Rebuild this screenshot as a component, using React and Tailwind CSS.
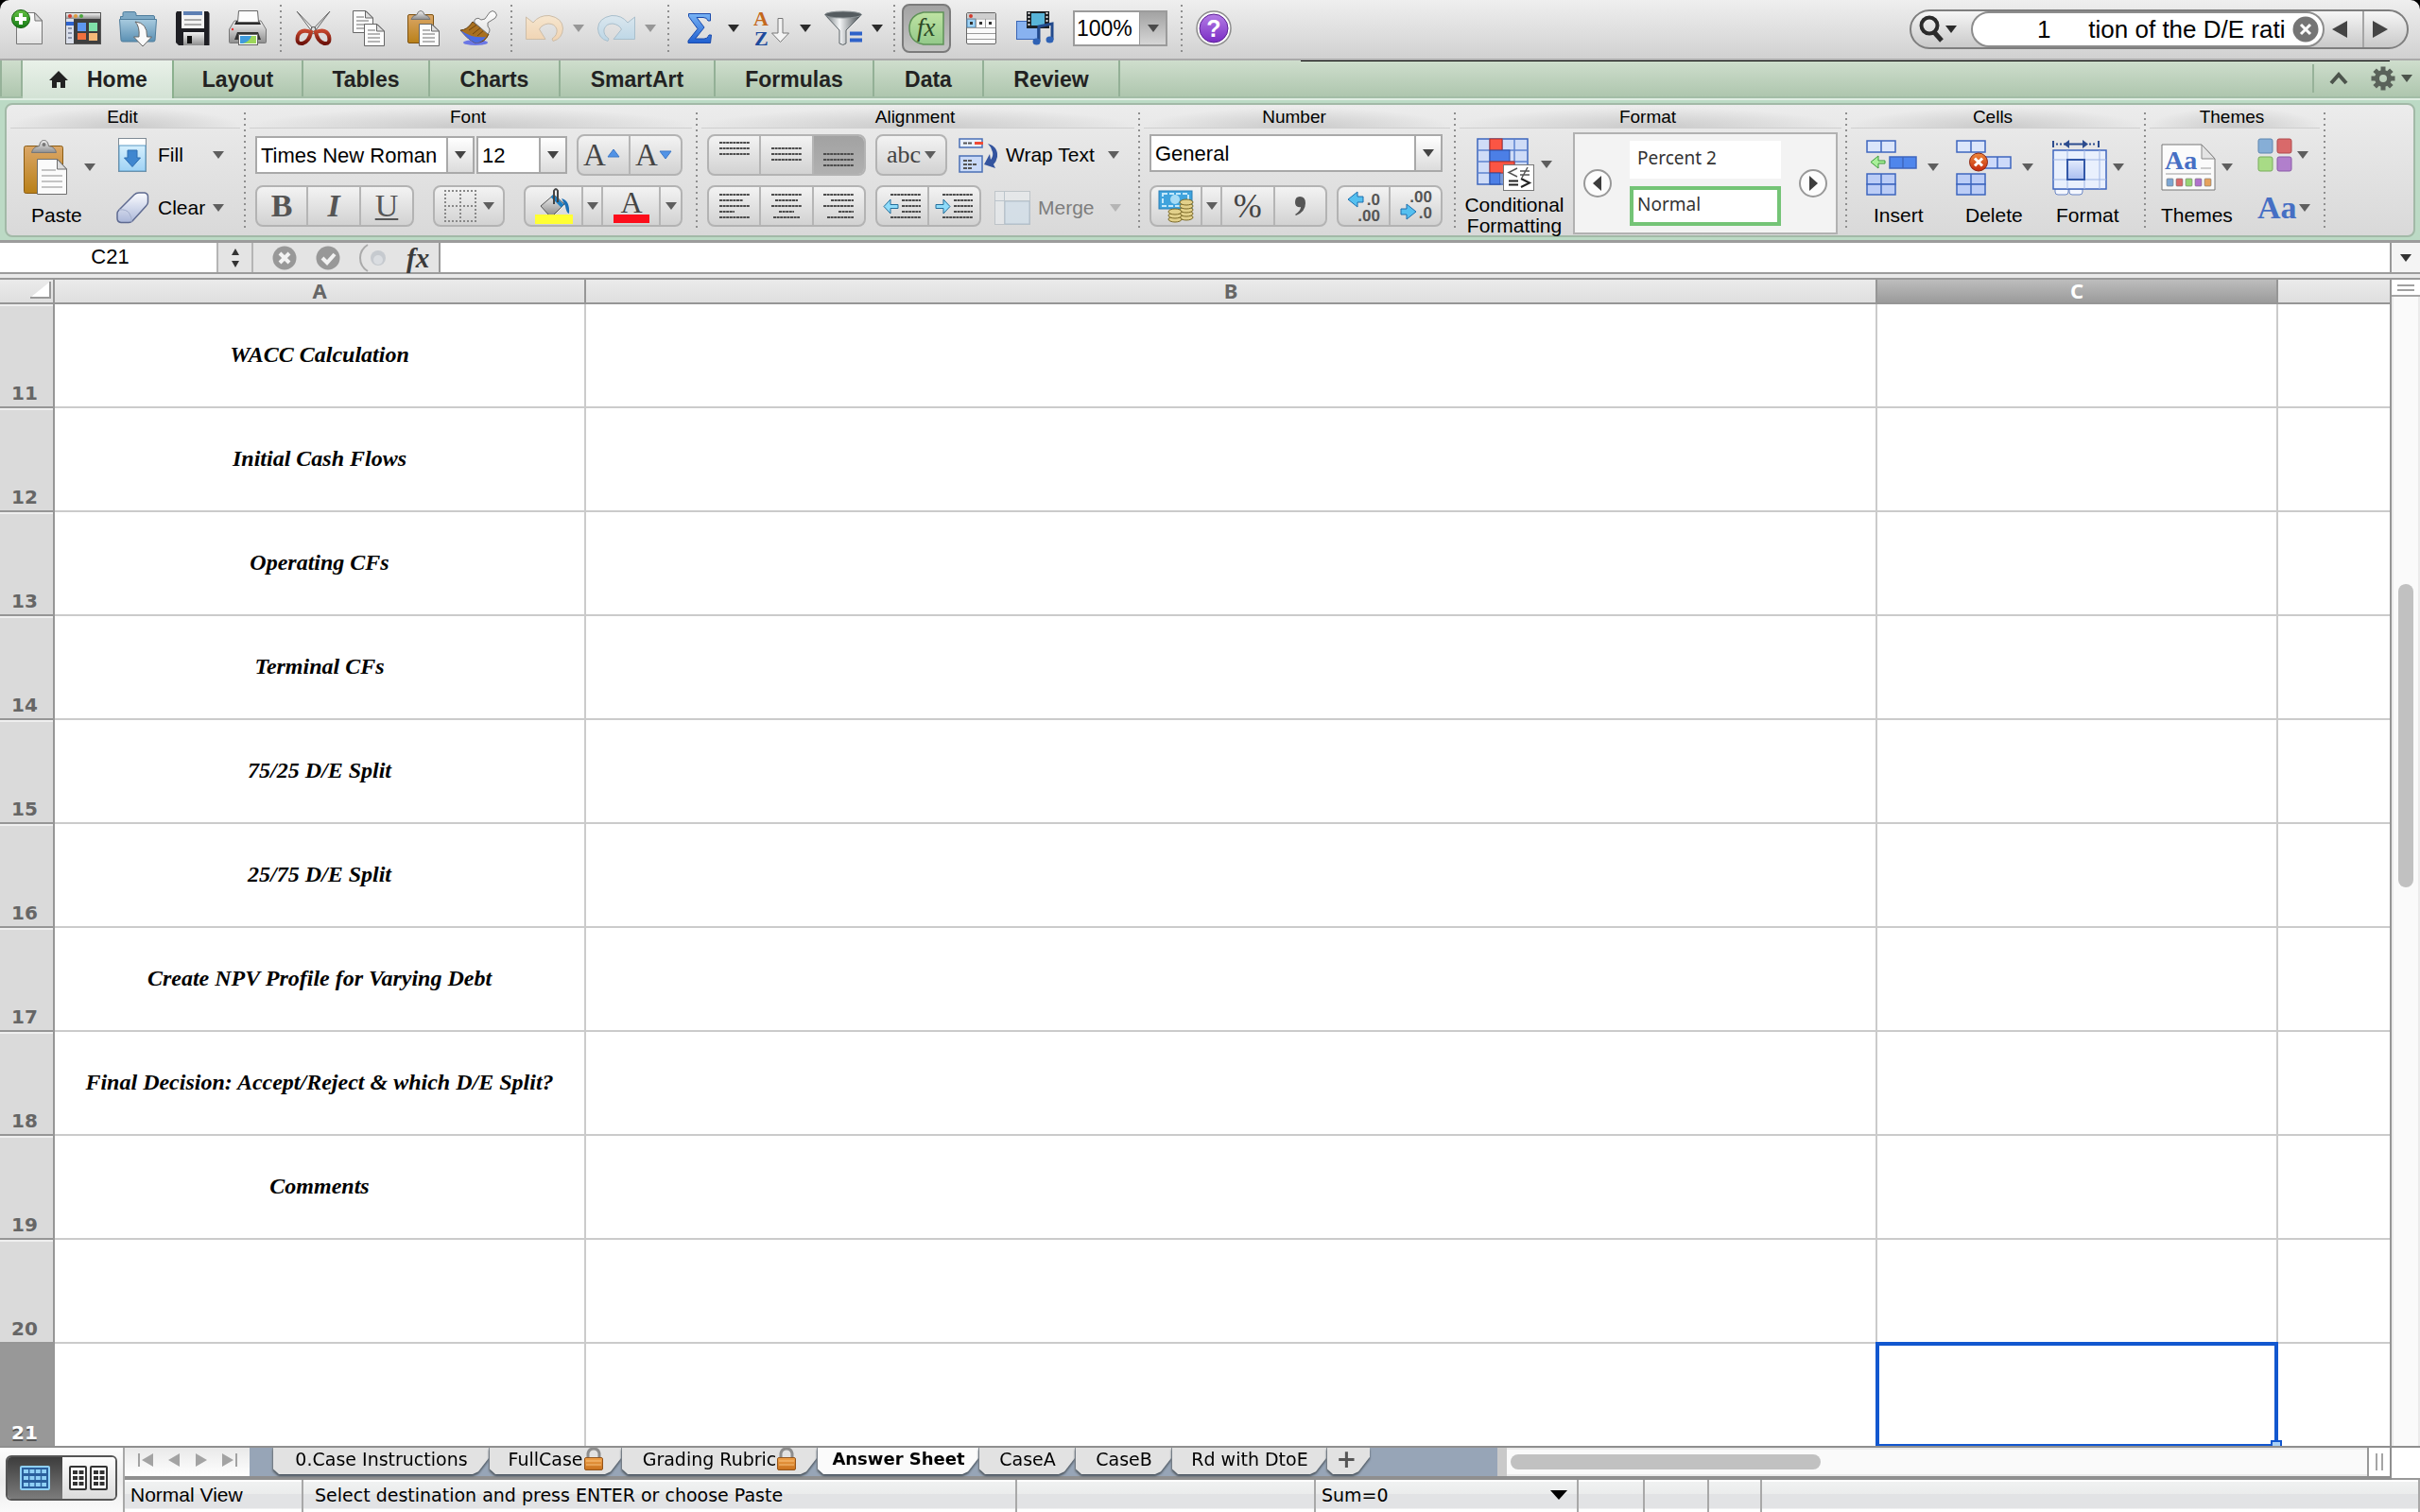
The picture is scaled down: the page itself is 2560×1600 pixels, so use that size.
import React from "react";

const SANS = "font-['Liberation_Sans',Arial,sans-serif]";
const GRANDE = "font-['DejaVu_Sans','Noto_Sans',sans-serif]";

/* ---------- small shared pieces ---------- */

function Arrow({ color = "#5e5e5e", className = "" }) {
  return (
    <svg viewBox="0 0 12 8" className={"h-2 w-3 shrink-0 " + className} aria-hidden="true">
      <path d="M0 0H12L6 8Z" fill={color} />
    </svg>
  );
}

function Dots({ className = "" }) {
  return (
    <div className={"w-0.5 shrink-0 bg-[repeating-linear-gradient(#8f8f8f_0_2px,transparent_2px_6px)] " + className} />
  );
}

function ToolSep({ wide = true }) {
  return (
    <div className={"flex h-[50px] shrink-0 justify-center " + (wide ? "w-[30px]" : "w-[26px]")}>
      <Dots className="h-full" />
    </div>
  );
}

function Tool({ label, children, className = "w-10" }) {
  return (
    <button type="button" aria-label={label} className={"flex h-10 shrink-0 items-center justify-center " + className}>
      {children}
    </button>
  );
}

function ToolArrow({ label, color = "#2b2b2b" }) {
  return (
    <button type="button" aria-label={label} className="flex h-10 w-3 shrink-0 items-center">
      <Arrow color={color} />
    </button>
  );
}

function Segment({ className = "", children }) {
  return (
    <div
      className={
        "flex h-11 shrink-0 divide-x-2 divide-[#b5b5b5] overflow-hidden rounded-lg border-2 border-[#b3b3b3] bg-linear-to-b from-[#f3f3f3] to-[#d2d2d2] " +
        className
      }
    >
      {children}
    </div>
  );
}

function Seg({ label, className = "flex-1", children, pressed = false }) {
  return (
    <button
      type="button"
      aria-label={label}
      aria-pressed={pressed}
      className={
        "flex items-center justify-center leading-none " +
        (pressed ? "bg-linear-to-b from-[#a2a2a2] to-[#b0b0b0] " : "") +
        className
      }
    >
      {children}
    </button>
  );
}

function Combo({ label, value, className, arrowWidth }) {
  return (
    <div className={"relative h-10 shrink-0 border-2 border-[#a9a9a9] bg-white " + className}>
      <select
        aria-label={label}
        defaultValue={value}
        className="h-full w-full appearance-none bg-transparent pl-1 text-[22px] text-black outline-none"
      >
        <option>{value}</option>
      </select>
      <span
        className={
          "pointer-events-none absolute inset-y-0 right-0 flex items-center justify-center border-l-2 border-[#a9a9a9] bg-linear-to-b from-white to-[#dcdcdc] " +
          arrowWidth
        }
      >
        <Arrow color="#444" />
      </span>
    </div>
  );
}

function Group({ title, width, children }) {
  return (
    <section aria-label={title} className={"flex shrink-0 flex-col " + width}>
      <h2 className="mx-1 h-[25px] border-b border-[#cfcfcf] bg-[radial-gradient(ellipse_50%_90%_at_50%_100%,#c9c9c9,transparent)] pr-1.5 text-center text-[19px] leading-[25px]">
        {title}
      </h2>
      {children}
    </section>
  );
}

function BigButton({ label, icon, className = "", arrowClass = "ml-4" }) {
  return (
    <button type="button" className={"flex shrink-0 flex-col pt-3 text-[21px] leading-6 " + className}>
      <span className="flex h-[58px] items-center">
        {icon}
        <Arrow className={arrowClass} />
      </span>
      <span className="mt-2.5">{label}</span>
    </button>
  );
}

function Lines({ rows, className = "" }) {
  return (
    <svg viewBox="0 0 32 32" className={"h-8 w-8 " + className} aria-hidden="true">
      {rows.map(([x, y, w]) => (
        <path key={y} d={`M${x} ${y}h${w}`} stroke="#4c4c4c" strokeWidth="2" strokeDasharray="3 0.6" />
      ))}
    </svg>
  );
}

/* ---------- gradients used by the icons ---------- */

function Gradients() {
  const list = [
    ["gPaper", "#ffffff", "#e2e2e2"],
    ["gGreen", "#66c244", "#157a16"],
    ["gFolder", "#a8cbdf", "#5b90b3"],
    ["gBoard", "#dba768", "#b98018"],
    ["gMetal", "#f4f4f4", "#8d8d8d"],
    ["gRed", "#c4452c", "#6d120a"],
    ["gBlue", "#79b4f5", "#1f5fd0"],
    ["gUndo", "#f6e6cf", "#f0d3b2"],
    ["gRedo", "#dbe7ee", "#bcd6e6"],
    ["gPurple", "#b47de6", "#7a2cc4"],
    ["gFx", "#bfe3a3", "#93c98a"],
    ["gCell", "#e4ecfd", "#a9bdf0"],
    ["gDel", "#f08a3a", "#c42a10"],
    ["gEraser", "#fbfcff", "#aab6d8"],
    ["gFill", "#d5effd", "#9fd2f5"],
    ["gLock", "#f0a24a", "#c8701c"],
  ];
  return (
    <svg className="absolute h-0 w-0" aria-hidden="true">
      <defs>
        {list.map(([id, a, b]) => (
          <linearGradient key={id} id={id} x1="0" y1="0" x2="0" y2="1">
            <stop offset="0" stopColor={a} />
            <stop offset="1" stopColor={b} />
          </linearGradient>
        ))}
        <linearGradient id="gFunnel" x1="0" y1="0" x2="1" y2="0">
          <stop offset="0" stopColor="#6c7478" />
          <stop offset="0.4" stopColor="#f4f6f7" />
          <stop offset="1" stopColor="#3f464a" />
        </linearGradient>
      </defs>
    </svg>
  );
}

/* ---------- toolbar icons (40 x 40) ---------- */

function Icon({ children, className = "h-10 w-10", box = "0 0 40 40" }) {
  return (
    <svg viewBox={box} className={"shrink-0 overflow-visible " + className} fill="none" aria-hidden="true">
      {children}
    </svg>
  );
}

const NewIcon = () => (
  <Icon>
    <path d="M7.500 3.500H27L34.500 11.500V36.500H7.500Z" fill="url(#gPaper)" stroke="#777" />
    <path d="M26.500 3.500L34.500 12H27Z" fill="#d8d8d8" stroke="#777" />
    <circle cx="12" cy="10" r="9.500" fill="url(#gGreen)" stroke="#14600f" />
    <path d="M12 4v12M6 10h12" stroke="#fff" strokeWidth="4" />
  </Icon>
);

const GalleryIcon = () => (
  <Icon>
    <rect x="1.500" y="3.500" width="37" height="33" fill="#3e3e3e" stroke="#555" />
    <rect x="2" y="4" width="36" height="6" fill="url(#gMetal)" />
    <circle cx="6" cy="7" r="2" fill="#d23a2e" />
    <circle cx="12" cy="7" r="2" fill="#e09a3c" />
    <circle cx="18" cy="7" r="2" fill="#4aa53c" />
    <rect x="2" y="10" width="8" height="26" fill="#d9deea" />
    <rect x="2" y="13" width="8" height="4" fill="#2d63cf" />
    <path d="M4 20h4M4 25h4M4 30h4" stroke="#8b93a8" strokeWidth="2" />
    <rect x="14" y="14" width="9" height="9" fill="#5d97f0" />
    <rect x="26" y="14" width="9" height="9" fill="#7fe0a8" />
    <rect x="14" y="25" width="9" height="7" fill="#f0703e" />
    <rect x="26" y="25" width="9" height="8" fill="#f4b978" />
  </Icon>
);

const OpenIcon = () => (
  <Icon>
    <path d="M1.500 7.500H4V4q0-1.500 1.500-1.500H16q1.500 0 2 2V6.500H36q1.500 0 1.500 1.500V12H1.500Z" fill="#7faac6" stroke="#4f7d9c" />
    <path d="M.500 10.500h39L38 32.500q0 1.500-2 1.500H4q-2 0-2-1.500Z" fill="url(#gFolder)" stroke="#4f7d9c" />
    <path d="M17 13q13 1 12.500 16h5L25 39l-9.500-10H21Q22 18 17 13Z" fill="#fafafa" stroke="#666" />
  </Icon>
);

const SaveIcon = () => (
  <Icon>
    <path d="M3 2H36l1.500 2V38H5l-3-3V4Z" fill="#1f1f24" />
    <rect x="8" y="2" width="24" height="18" fill="#f3f3f3" />
    <rect x="10" y="2" width="20" height="4" fill="#5d7fb3" />
    <path d="M11 11h18M11 16h18" stroke="#aaa" strokeWidth="2" />
    <rect x="10" y="24" width="22" height="14" fill="url(#gMetal)" />
    <rect x="14" y="28" width="5" height="8" fill="#111" />
  </Icon>
);

const PrintIcon = () => (
  <Icon>
    <path d="M6 12h28l5.500 9v13.500q0 1-1 1h-37q-1 0-1-1V21Z" fill="url(#gMetal)" stroke="#777" />
    <path d="M8 12h24l2 4H6Z" fill="#2a2a2a" />
    <path d="M10.500 1.500h20l1 12H9.500Z" fill="#fdfdfd" stroke="#666" />
    <path d="M9 24h22l3 8H6Z" fill="#333" />
    <rect x="10.500" y="26.500" width="20" height="11" fill="#fff" stroke="#666" />
    <rect x="12" y="28" width="17" height="8" fill="#3f9bdc" />
    <path d="M15 36q7-2 9-8h5v8Z" fill="#9cd65b" />
    <circle cx="4" cy="21" r="1.200" fill="#e33" />
  </Icon>
);

const CutIcon = () => (
  <Icon>
    <path d="M2 2L23 24L20 26Z" fill="#f4f4f4" stroke="#666" />
    <path d="M37 2L16 24L19 26Z" fill="#e0e0e0" stroke="#666" />
    <circle cx="19.500" cy="21" r="2.500" fill="#ddd" stroke="#444" />
    <path d="M17 24Q6 20 3 28Q1 37 8 36Q15 34 17 24Z" stroke="url(#gRed)" strokeWidth="4" />
    <path d="M22 24Q33 20 36 28Q38 37 31 36Q24 34 22 24Z" stroke="url(#gRed)" strokeWidth="4" />
  </Icon>
);

function Sheet({ x, y }) {
  return (
    <g transform={`translate(${x} ${y})`}>
      <path d="M.500.500H14L21.500 8V23.500H.500Z" fill="#fcfcfc" stroke="#666" />
      <path d="M13.500.500V8H21.500Z" fill="#ddd" stroke="#666" />
      <path d="M4 7h8M4 11h13M4 15h13M4 19h13" stroke="#b5b5b5" strokeWidth="2" />
    </g>
  );
}

const CopyIcon = () => (
  <Icon>
    <Sheet x={3} y={1} />
    <Sheet x={15} y={15} />
  </Icon>
);

const PasteSmallIcon = () => (
  <Icon>
    <rect x="3.500" y="5.500" width="27" height="30" rx="1.500" fill="url(#gBoard)" stroke="#7d5212" />
    <path d="M7 10.500q1-4 6-5q1-4 4-4t4 4q5 1 6 5Z" fill="url(#gMetal)" stroke="#777" />
    <Sheet x={15} y={15} />
  </Icon>
);

const BrushIcon = () => (
  <Icon>
    <ellipse cx="17" cy="35" rx="13" ry="3" fill="#4655e8" opacity=".75" />
    <path d="M14 13L31 26Q27 36 16 35Q8 31 1 22Q8 22 14 13Z" fill="#a9701f" stroke="#5d3a0c" />
    <path d="M1 22Q14 31 28 29Q24 36 16 35Q8 31 1 22Z" fill="#4b6be0" />
    <path d="M10 22l10-7M14 26l10-8M19 28l8-7" stroke="#6e430e" />
    <path d="M17 10q3-2 6 1l4-1 5-7q3-3 6 0t0 6l-8 5v4q4 4 0 8L16 14q-1-2 1-4Z" fill="url(#gPaper)" stroke="#777" />
  </Icon>
);

const UndoIcon = () => (
  <Icon>
    <path d="M.500 8L8 14Q14 6 25 6.500Q39 9 39.500 20Q39 31 29 33.500L28 31Q34 27 33 21Q31 15 24 15Q17 16 14.500 21L21 31.500H.500Z" fill="url(#gUndo)" stroke="#cdbda8" />
  </Icon>
);

const RedoIcon = () => (
  <Icon>
    <path d="M39.500 8L32 14Q26 6 15 6.500Q1 9 .500 20Q1 31 11 33.500L12 31Q6 27 7 21Q9 15 16 15Q23 16 25.500 21L17 31.500H39.500Z" fill="url(#gRedo)" stroke="#a9bfcc" />
  </Icon>
);

const SigmaIcon = () => (
  <Icon>
    <path d="M8.500 4.500H31.500V12H29Q28 8.500 24 8.500H17L25 19L15.500 31H25Q29 31 30 27H32.500L31.500 35.500H8V33L18 20.500L8.500 7.500Z" fill="url(#gBlue)" stroke="#1b4bab" />
  </Icon>
);

const SortIcon = () => (
  <Icon>
    <text x="1" y="17" fontFamily="Liberation Serif, serif" fontWeight="bold" fontSize="22" fill="#c4681c">A</text>
    <text x="2" y="38" fontFamily="Liberation Serif, serif" fontWeight="bold" fontSize="22" fill="#1e4a9c">Z</text>
    <path d="M27 9.500h5V25h6.500L29.500 34.500L20.500 25H27Z" fill="#f4f4f4" stroke="#777" />
  </Icon>
);

const FilterIcon = () => (
  <Icon>
    <path d="M1 6L16 22V36q4 3 7 0V22L39 6Z" fill="url(#gFunnel)" stroke="#5c6468" />
    <ellipse cx="20" cy="5.500" rx="19.500" ry="3.500" fill="#555c60" stroke="#8e9598" />
    <path d="M27 25.500h13M27 32.500h13" stroke="#2e62c9" strokeWidth="4" />
  </Icon>
);

const ToolboxIcon = () => (
  <Icon>
    <rect x="4.500" y="3.500" width="31" height="33" rx="1.500" fill="#fafafa" stroke="#666" />
    <path d="M5 5q0-1 1-1h28q1 0 1 1v4H5Z" fill="#cfcfcf" />
    <circle cx="9" cy="7" r="2" fill="#d33a2c" />
    <rect x="5" y="10" width="9" height="9" fill="#9fd3f5" stroke="#4c86b5" />
    <path d="M14.500 10v9M24.500 10v9M5 19.500h30M5 25.500h30M5 31.500h30M5 10h30" stroke="#999" />
    <path d="M8 14.500h3M18 14.500h3M28 14.500h3" stroke="#333" strokeWidth="3" />
  </Icon>
);

const MediaIcon = () => (
  <Icon>
    <rect x=".500" y="12.500" width="22" height="19" fill="#88b2f0" stroke="#3a66b5" />
    <rect x="11" y="2" width="24" height="18" fill="#1c2024" />
    <rect x="16" y="4" width="14" height="13" fill="#58b4d8" />
    <path d="M13.500 3v16M32.500 3v16" stroke="#ddd" strokeWidth="2" strokeDasharray="2 2" />
    <path d="M24 34V18l14-3v17" stroke="#234a8c" strokeWidth="3" />
    <ellipse cx="21.500" cy="34" rx="4" ry="3.500" fill="#2f62b5" />
    <ellipse cx="35.500" cy="32" rx="4" ry="3.500" fill="#2f62b5" />
  </Icon>
);

const HelpIcon = () => (
  <Icon>
    <circle cx="20" cy="20" r="18" fill="#fff" stroke="#8d8d8d" strokeWidth="1.500" />
    <circle cx="20" cy="20" r="15" fill="url(#gPurple)" stroke="#5d2196" />
    <text x="20" y="29" textAnchor="middle" fontFamily="Liberation Sans, sans-serif" fontWeight="bold" fontSize="25" fill="#fff">?</text>
  </Icon>
);

/* ---------- ribbon icons ---------- */

const PasteBigIcon = () => (
  <Icon box="0 0 46 58" className="h-[58px] w-[46px]">
    <rect x=".500" y="6.500" width="41" height="50" rx="2" fill="url(#gBoard)" stroke="#8a5c14" />
    <path d="M8.500 13.500q1-6 8-7q1-6 5-6t5 6q7 1 8 7Z" fill="url(#gMetal)" stroke="#777" />
    <circle cx="21.500" cy="5" r="2" fill="#777" />
    <path d="M14.500 20.500H36L45.500 31V57.500H14.500Z" fill="#fbfbfb" stroke="#6d6d6d" />
    <path d="M35.500 20.500V31H45.500Z" fill="#ddd" stroke="#6d6d6d" />
    <path d="M19 32h15M19 38h22M19 44h22M19 50h22" stroke="#c4c4c4" strokeWidth="2" />
  </Icon>
);

const FillIcon = () => (
  <Icon box="0 0 30 36" className="mx-0.5 h-9 w-[30px]">
    <rect x=".500" y=".500" width="29" height="35" fill="#fff" stroke="#7f8b95" />
    <rect x="1" y="8" width="28" height="27" fill="url(#gFill)" stroke="#5b9ac4" />
    <path d="M10 13h10v8h3.500L15 30.500L6.500 21H10Z" fill="#3f86cf" stroke="#2c6cb0" />
  </Icon>
);

const EraserIcon = () => (
  <Icon box="0 0 34 34" className="h-[34px] w-[34px]">
    <path d="M19 3q2-2 5-2h6q4 1 3.500 5v5q0 2-2 4L17 31q-2 2-5 1.500H5Q1 32 1 28v-5q0-2 2-4Z" fill="url(#gEraser)" stroke="#5e6a90" strokeWidth="1.500" />
    <path d="M3 19q8-1 11 4t2 9" stroke="#a3aecb" />
  </Icon>
);

const BordersIcon = () => (
  <Icon box="0 0 36 36" className="h-9 w-9">
    <path d="M1 2h34M1 18h34M1 34h34M2 1v34M18 1v34M34 1v34" stroke="#888" strokeWidth="2" strokeDasharray="2 2" />
  </Icon>
);

const BucketIcon = () => (
  <Icon box="0 0 40 40" className="h-10 w-10">
    <path d="M6 20L20 8L31 18L19 30H15Z" fill="url(#gMetal)" stroke="#555" />
    <path d="M18 9L29 20" stroke="#1d7fc4" strokeWidth="4" />
    <path d="M28 12q9 2 8 16q-3-1-4-8Z" fill="#1c6fb5" />
    <path d="M20 18V4q2-4 4 0V16" stroke="#444" strokeWidth="2" />
    <rect x="0" y="29" width="40" height="10" fill="#ffff33" />
  </Icon>
);

const FontColorIcon = () => (
  <Icon box="0 0 40 40" className="h-10 w-10">
    <text x="20" y="27" textAnchor="middle" fontFamily="Liberation Serif, serif" fontSize="32" fill="#444">A</text>
    <rect x="1" y="29" width="38" height="9" fill="#fc0d1b" />
  </Icon>
);

const SizeIcon = ({ down }) => (
  <Icon box="0 0 44 36" className="h-9 w-11">
    <text x="0" y="29" fontFamily="Liberation Serif, serif" fontSize="33" fill="#444">A</text>
    <path d={down ? "M26 14h12L32 22Z" : "M26 20h12L32 12Z"} fill="#5293e6" stroke="#3c78c8" />
  </Icon>
);

const IndentIcon = ({ right }) => (
  <Icon box="0 0 42 32" className="h-8 w-[42px]">
    <path d="M8 4h32M20 10h20M20 16h20M20 22h20M8 28h32" stroke="#4c4c4c" strokeWidth="2" strokeDasharray="3 0.6" />
    {right ? (
      <path d="M1 14.500h8V9L16 16.500L9 24v-5.500H1Z" fill="#8fdcfa" stroke="#246f9c" />
    ) : (
      <path d="M16 14.500h-8V9L1 16.500L8 24v-5.500h8Z" fill="#8fdcfa" stroke="#246f9c" />
    )}
  </Icon>
);

const WrapIcon = () => (
  <Icon box="0 0 42 38" className="h-[38px] w-[42px]">
    <rect x="1" y="2" width="24" height="9" fill="#eaf1fd" stroke="#4a6fb5" strokeWidth="1.500" />
    <path d="M5 6.500h10" stroke="#555" strokeWidth="2" strokeDasharray="4 1" />
    <path d="M17 6.500h9" stroke="#f04a34" strokeWidth="3" />
    <rect x="1" y="20" width="24" height="17" fill="#c9d9f7" stroke="#4a6fb5" strokeWidth="1.500" />
    <path d="M5 25h10M5 29h14M5 33h10" stroke="#555" strokeWidth="2" strokeDasharray="4 1" />
    <path d="M31 7Q42 10 41 21Q40 26 37 29L39 33L27 29L33 18L34 24Q37 20 36 16Q35 11 31 7Z" fill="#34549e" />
  </Icon>
);

const MergeIcon = () => (
  <Icon box="0 0 38 36" className="h-9 w-[38px] opacity-60">
    <rect x=".500" y=".500" width="37" height="35" fill="#e9edf0" stroke="#aab4bc" />
    <rect x="11" y="11" width="26" height="24" fill="#cfe0ee" stroke="#93abc0" />
    <path d="M0 10.500h37M10.500 0v36" stroke="#a5b4c0" />
  </Icon>
);

const MoneyIcon = () => (
  <Icon box="0 0 38 36" className="h-9 w-[38px]">
    <rect x="1" y="2" width="35" height="19" fill="#3fa3dd" stroke="#2b7fb5" />
    <rect x="5" y="5" width="27" height="13" stroke="#c4e8fa" strokeWidth="2" strokeDasharray="5 2" />
    <circle cx="18" cy="11" r="5" fill="#a8dcf5" />
    {[30, 26, 22, 18, 14].map((y) => (
      <ellipse key={y} cx="30" cy={y} rx="7" ry="3" fill="#e2d08a" stroke="#7c6a28" />
    ))}
    {[32, 28, 24].map((y) => (
      <ellipse key={y} cx="18" cy={y} rx="7" ry="3" fill="#e2d08a" stroke="#7c6a28" />
    ))}
  </Icon>
);

const DecimalIcon = ({ increase }) => (
  <Icon box="0 0 40 38" className="h-[38px] w-10">
    <g fontFamily="Liberation Sans, sans-serif" fontWeight="bold" fontSize="17" fill="#555">
      <text x="37" y={increase ? 18 : 15} textAnchor="end">{increase ? ".0" : ".00"}</text>
      <text x="37" y={increase ? 35 : 32} textAnchor="end">{increase ? ".00" : ".0"}</text>
    </g>
    {increase ? (
      <path d="M19 9h-6V4L3 12l10 8v-5h6Z" fill="#55c0f0" stroke="#1d6fae" />
    ) : (
      <path d="M4 22h6v-5l10 8-10 8v-5H4Z" fill="#55c0f0" stroke="#1d6fae" />
    )}
  </Icon>
);

const CondIcon = () => (
  <Icon box="0 0 62 56" className="h-14 w-[62px]">
    <rect x="1" y="1" width="53" height="48" fill="#cfdcf7" stroke="#3d66bd" strokeWidth="1.500" />
    <path d="M14 1v48M27 1v48M40 1v48M1 13h53M1 25h53M1 37h53" stroke="#5d83d0" strokeWidth="1.500" />
    <rect x="14" y="1" width="13" height="12" fill="#fb5544" stroke="#b52e22" />
    <rect x="14" y="13" width="21" height="12" fill="#4c7fe6" stroke="#274fa8" />
    <rect x="14" y="25" width="26" height="12" fill="#fb5544" stroke="#b52e22" />
    <rect x="14" y="37" width="11" height="12" fill="#4c7fe6" stroke="#274fa8" />
    <rect x="28.500" y="28.500" width="32" height="27" fill="#fff" stroke="#777" />
    <path d="M43 32l-9 4.500 9 4.500M46 35h10M46 39h10M54 31l-6 11" stroke="#555" strokeWidth="1.500" />
    <path d="M34 45.500h10M34 49.500h10M47 43l9 4.500-9 4.500" stroke="#222" strokeWidth="2" />
  </Icon>
);

const CellPair = ({ x, y, w = 30, h = 12, fill = "#dbe6fb" }) => (
  <g stroke="#3e66be" strokeWidth="1.500">
    <rect x={x} y={y} width={w} height={h} fill={fill} />
    <path d={`M${x + w / 2} ${y}v${h}`} />
  </g>
);

const InsertIcon = () => (
  <Icon box="0 0 54 58" className="h-[58px] w-[54px]">
    <CellPair x={1} y={1} />
    <CellPair x={25} y={18} w={28} fill="#4f86ec" />
    <CellPair x={1} y={36} h={11} fill="#bccdf6" />
    <CellPair x={1} y={47} h={11} fill="#bccdf6" />
    <path d="M20 22h-7v-5L5 23.500l8 6.500v-5h7Z" fill="#a9f09a" stroke="#3c9a3a" />
  </Icon>
);

const DeleteIcon = () => (
  <Icon box="0 0 60 58" className="h-[58px] w-[60px]">
    <CellPair x={1} y={1} />
    <CellPair x={30} y={18} w={28} fill="#cddafa" />
    <CellPair x={1} y={36} h={11} fill="#bccdf6" />
    <CellPair x={1} y={47} h={11} fill="#bccdf6" />
    <circle cx="24" cy="23.500" r="9.500" fill="url(#gDel)" stroke="#8c2410" />
    <path d="M20 19.500l8 8M28 19.500l-8 8" stroke="#fff" strokeWidth="3" />
  </Icon>
);

const FormatIcon = () => (
  <Icon box="0 0 58 60" className="h-[60px] w-[58px]">
    <path d="M1 2v7M49 2v7" stroke="#2c4c8e" strokeWidth="2" />
    <path d="M4 5.500h10M39 5.500h8" stroke="#2c4c8e" strokeWidth="2" strokeDasharray="2 2" />
    <path d="M16 5.500h20" stroke="#2c4c8e" strokeWidth="2" />
    <path d="M12 5.500l6-4.500v9ZM38 5.500l-6-4.500v9Z" fill="#2c4c8e" />
    <path d="M3 53h14v3q0 3-3 3H6q-3 0-3-3ZM18 53h14v3q0 3-3 3h-8q-3 0-3-3Z" fill="#f4f7ff" stroke="#6a86c4" />
    <rect x="1" y="12" width="56" height="41" fill="#e9f0fd" stroke="#3e66be" strokeWidth="1.500" />
    <path d="M16 12v41M34 12v41M50 12v41M1 22h56M1 43h56" stroke="#9fb5e4" />
    <rect x="16" y="22" width="18" height="21" fill="url(#gCell)" stroke="#3358a8" strokeWidth="2" />
  </Icon>
);

const ThemesIcon = () => (
  <Icon box="0 0 58 50" className="h-[50px] w-[58px]">
    <path d="M1 1H43L57 16V49H1Z" fill="#fbfbfb" stroke="#777" />
    <path d="M43 1V16H57Z" fill="#e4e4e4" stroke="#888" />
    <text x="4" y="27" fontFamily="Liberation Serif, serif" fontWeight="bold" fontSize="28" fill="#466fc4">Aa</text>
    <path d="M42 26h11M5 32h48" stroke="#ccc" strokeWidth="2" />
    {["#7da7d4", "#d9696a", "#96d372", "#b070cc", "#e6a25c"].map((c, i) => (
      <rect key={c} x={6 + i * 10} y="37" width="7" height="8" rx="1" fill={c} stroke="#777" strokeWidth=".6" />
    ))}
  </Icon>
);

const ColorsIcon = () => (
  <Icon box="0 0 38 36" className="h-9 w-[38px]">
    <rect x="1" y="1" width="15" height="15" rx="2" fill="#86aed6" stroke="#5c86b0" />
    <rect x="21" y="1" width="15" height="15" rx="2" fill="#d9696a" stroke="#b04a4c" />
    <rect x="1" y="20" width="15" height="15" rx="2" fill="#a8db86" stroke="#78ad5a" />
    <rect x="21" y="20" width="15" height="15" rx="2" fill="#b17fcc" stroke="#8a5aa8" />
  </Icon>
);

const LockIcon = () => (
  <Icon box="0 0 22 26" className="h-[26px] w-[22px]">
    <path d="M5 13V7q1-5 6-5t6 5v6" stroke="#8d8d8d" strokeWidth="3" />
    <rect x="1.500" y="11.500" width="19" height="13" rx="1.500" fill="url(#gLock)" stroke="#94541a" />
    <path d="M3 15h16M3 19h16" stroke="#f7c07c" />
  </Icon>
);

/* ---------- window sections ---------- */

function Toolbar() {
  return (
    <div className="bg-black">
      <div className="flex h-16 items-start justify-between rounded-t-[10px] border-b-2 border-[#a9a9a9] bg-linear-to-b from-[#efefef] to-[#d1d1d1] pr-3 pl-2.5">
        <div className="flex items-center pt-1">
          <div className="flex gap-[18px]">
            <Tool label="New"><NewIcon /></Tool>
            <Tool label="Template gallery"><GalleryIcon /></Tool>
            <Tool label="Open"><OpenIcon /></Tool>
            <Tool label="Save"><SaveIcon /></Tool>
            <Tool label="Print"><PrintIcon /></Tool>
          </div>
          <ToolSep />
          <div className="flex gap-[18px]">
            <Tool label="Cut"><CutIcon /></Tool>
            <Tool label="Copy"><CopyIcon /></Tool>
            <Tool label="Paste"><PasteSmallIcon /></Tool>
            <Tool label="Format painter"><BrushIcon /></Tool>
          </div>
          <ToolSep />
          <div className="flex">
            <Tool label="Undo" className="mr-2.5 w-10"><UndoIcon /></Tool>
            <ToolArrow label="Undo history" color="#979797" />
            <Tool label="Redo" className="mr-2.5 ml-3.5 w-10"><RedoIcon /></Tool>
            <ToolArrow label="Redo history" color="#979797" />
          </div>
          <ToolSep wide={false} />
          <div className="flex">
            <Tool label="AutoSum" className="mr-2.5 w-10"><SigmaIcon /></Tool>
            <ToolArrow label="AutoSum options" />
            <Tool label="Sort" className="mr-2.5 ml-3.5 w-10"><SortIcon /></Tool>
            <ToolArrow label="Sort options" />
            <Tool label="Filter" className="mr-2.5 ml-3.5 w-10"><FilterIcon /></Tool>
            <ToolArrow label="Filter options" />
          </div>
          <div className="flex h-[50px] w-5 justify-center pl-1">
            <Dots className="h-full" />
          </div>
          <button
            type="button"
            aria-label="Formula builder"
            aria-pressed="true"
            className="flex h-[52px] w-[52px] items-center justify-center rounded-lg border-2 border-[#7b7b7b] bg-linear-to-b from-[#a3a3a3] to-[#c4c4c4]"
          >
            <Icon box="0 0 38 36" className="h-9 w-[38px]">
              <path d="M37 1V35H16Q1 32 1 18T16 1Z" fill="url(#gFx)" stroke="#5f9258" strokeWidth="1.500" />
              <text x="9" y="26" fontFamily="Liberation Serif, serif" fontStyle="italic" fontSize="27" fill="#2c4a26">fx</text>
            </Icon>
          </button>
          <div className="flex items-center gap-[17px] pl-3">
            <Tool label="Toolbox"><ToolboxIcon /></Tool>
            <Tool label="Media browser"><MediaIcon /></Tool>
          </div>
          <div className="relative ml-5 h-[38px] w-[100px] border-2 border-[#9b9b9b] bg-white">
            <select aria-label="Zoom" defaultValue="100%" className="h-full w-full appearance-none bg-transparent pl-0.5 text-[23px] outline-none">
              <option>100%</option>
            </select>
            <span className="pointer-events-none absolute inset-y-0 right-0 flex w-7 items-center justify-center border-l border-[#999] bg-linear-to-b from-[#a3a3a3] to-[#d6d6d6]">
              <Arrow color="#4a4a4a" />
            </span>
          </div>
          <ToolSep />
          <Tool label="Help" className="w-[38px]"><HelpIcon /></Tool>
        </div>

        <form
          role="search"
          onSubmit={(e) => e.preventDefault()}
          className="mt-2.5 flex h-[42px] w-[528px] items-center overflow-hidden rounded-full border-2 border-[#7e7e7e] bg-linear-to-b from-[#f6f6f6] to-[#c9c9c9]"
        >
          <button type="button" aria-label="Search scope" className="flex w-[63px] items-center pl-2">
            <Icon box="0 0 28 30" className="h-[30px] w-7">
              <circle cx="11" cy="11" r="8.500" stroke="#2b2b2b" strokeWidth="4" />
              <path d="M16 18l8 9" stroke="#2b2b2b" strokeWidth="5" />
            </Icon>
            <Arrow color="#2b2b2b" />
          </button>
          <label className="flex h-full w-[374px] items-center rounded-full border-2 border-[#8c8c8c] bg-white pr-1">
            <input
              aria-label="Search in sheet"
              defaultValue={"1\u2003\u2004\u2009tion of the D/E rati"}
              className="w-0 flex-1 bg-transparent pl-[68px] text-[26px] outline-none"
            />
            <Icon box="0 0 28 28" className="h-7 w-7">
              <circle cx="14" cy="14" r="13.500" fill="#757575" />
              <path d="M9 9l10 10M19 9L9 19" stroke="#fff" strokeWidth="3" />
            </Icon>
          </label>
          <button type="button" aria-label="Previous result" className="flex h-full w-[42px] items-center justify-center border-r-2 border-[#a5a5a5] pr-2">
            <Icon box="0 0 16 18" className="h-[18px] w-4"><path d="M16 0V18L0 9Z" fill="#444" /></Icon>
          </button>
          <button type="button" aria-label="Next result" className="flex h-full flex-1 items-center justify-center pr-3">
            <Icon box="0 0 16 18" className="h-[18px] w-4"><path d="M0 0V18L16 9Z" fill="#444" /></Icon>
          </button>
        </form>
      </div>
    </div>
  );
}

const TABS = [
  ["Layout", "w-[137px]"],
  ["Tables", "w-[134px]"],
  ["Charts", "w-[138px]"],
  ["SmartArt", "w-[164px]"],
  ["Formulas", "w-[168px]"],
  ["Data", "w-[116px]"],
  ["Review", "w-[144px]"],
];

function RibbonTabs() {
  return (
    <nav className="relative flex h-10 items-stretch border-b-2 border-[#a3bda6] bg-linear-to-b from-[#cfdecd] to-[#aec6ae] text-[23px] font-bold text-[#222] [text-shadow:0_2px_0_rgba(255,255,255,0.45)]">
      <div className="absolute top-0 right-8 left-[1376px] h-px bg-black" />
      <div className="w-6 border-x-2 border-[#96b299]" />
      <button type="button" aria-current="page" className="-mb-0.5 flex w-40 items-center border-r-2 border-[#8bb08e] bg-linear-to-b from-[#e9f1e9] to-[#d3e2d5] pl-7">
        <Icon box="0 0 20 18" className="h-[18px] w-5">
          <path d="M10 0L20 10H17V18H12V12H8V18H3V10H0Z" fill="#222" />
        </Icon>
        <span className="ml-5">Home</span>
      </button>
      {TABS.map(([name, w]) => (
        <button key={name} type="button" className={"border-r-2 border-[#93b096] pt-0.5 " + w}>
          {name}
        </button>
      ))}
      <div className="my-1 ml-auto flex items-center border-l-2 border-[#97b299] pr-2">
        <button type="button" aria-label="Collapse ribbon" className="ml-4">
          <Icon box="0 0 20 14" className="h-3.5 w-5"><path d="M2 12L10 3L18 12" stroke="#4c544c" strokeWidth="4" /></Icon>
        </button>
        <button type="button" aria-label="Ribbon preferences" className="ml-6 flex items-center">
          <Icon box="0 0 26 26" className="h-[26px] w-[26px]">
            <circle cx="13" cy="13" r="6.500" stroke="#5a625a" strokeWidth="5" />
            {[0, 45, 90, 135].map((a) => (
              <path key={a} d="M13 0.500V5M13 21V25.500" stroke="#5a625a" strokeWidth="5" transform={`rotate(${a} 13 13)`} />
            ))}
          </Icon>
          <Arrow className="ml-1.5" color="#4c544c" />
        </button>
      </div>
    </nav>
  );
}

function Ribbon() {
  const full = 32;
  return (
    <div className="border-t-2 border-[#e0eee3] bg-[#bcdac5] px-[5px] pt-[3px] pb-[3px]">
      <div className="flex h-[142px] rounded-lg border-2 border-[#a2b9a7] bg-linear-to-b from-[#ececec] to-[#d9d9d9]">
        <Group title="Edit" width="w-[251px]">
          <div className="flex">
            <button type="button" className="ml-[18px] flex w-[78px] flex-col items-start pt-3 text-[21px] leading-6">
              <span className="flex h-[58px] items-center">
                <PasteBigIcon />
                <Arrow className="ml-[18px]" />
              </span>
              <span className="mt-2.5 pl-2">Paste</span>
            </button>
            <div className="flex flex-col gap-2.5 pt-1.5 pl-5 text-[21px]">
              <button type="button" className="flex h-11 items-center">
                <FillIcon />
                <span className="ml-2.5 w-[58px] text-left">Fill</span>
                <Arrow />
              </button>
              <button type="button" className="flex h-11 items-center pt-1">
                <EraserIcon />
                <span className="ml-2.5 w-[58px] text-left">Clear</span>
                <Arrow />
              </button>
            </div>
          </div>
        </Group>
        <Dots className="mt-2 mb-1" />

        <Group title="Font" width="w-[476px]">
          <div className="flex flex-col gap-2.5 pt-1.5 pl-2.5">
            <div className="flex items-center">
              <Combo label="Font name" value="Times New Roman" className="w-[232px]" arrowWidth="w-7" />
              <Combo label="Font size" value="12" className="ml-0.5 w-24" arrowWidth="w-7" />
              <Segment className="ml-2.5 w-28">
                <Seg label="Increase font size"><SizeIcon /></Seg>
                <Seg label="Decrease font size"><SizeIcon down /></Seg>
              </Segment>
            </div>
            <div className="flex font-['Liberation_Serif',serif] text-[34px] text-[#555]">
              <Segment className="w-[168px]">
                <Seg label="Bold" className="w-[54px]"><b>B</b></Seg>
                <Seg label="Italic" className="w-[56px]"><i className="font-bold">I</i></Seg>
                <Seg label="Underline"><u className="decoration-2 underline-offset-2">U</u></Seg>
              </Segment>
              <Segment className="ml-5 w-[76px]">
                <Seg label="Borders" className="flex-1 gap-1.5"><BordersIcon /><Arrow /></Seg>
              </Segment>
              <Segment className="ml-5 w-[168px]">
                <Seg label="Fill color" className="w-[61px]"><BucketIcon /></Seg>
                <Seg label="Fill color options" className="w-[21px]"><Arrow /></Seg>
                <Seg label="Font color" className="flex-1"><FontColorIcon /></Seg>
                <Seg label="Font color options" className="w-[21px]"><Arrow /></Seg>
              </Segment>
            </div>
          </div>
        </Group>
        <Dots className="mt-2 mb-1" />

        <Group title="Alignment" width="w-[466px]">
          <div className="flex flex-col gap-2.5 pt-1.5 pl-2.5 text-[21px]">
            <div className="flex items-center">
              <Segment className="w-[168px]">
                <Seg label="Align top"><Lines rows={[[0, 3, full], [0, 9, full], [0, 15, full]]} /></Seg>
                <Seg label="Align middle"><Lines rows={[[0, 9, full], [0, 15, full], [0, 21, full]]} /></Seg>
                <Seg label="Align bottom" pressed><Lines rows={[[0, 15, full], [0, 21, full], [0, 27, full]]} /></Seg>
              </Segment>
              <Segment className="ml-2.5 w-[76px]">
                <Seg label="Orientation" className="flex-1 gap-1 font-['Liberation_Serif',serif] text-[26px] text-[#444]">
                  abc
                  <Arrow />
                </Seg>
              </Segment>
              <button type="button" className="ml-3 flex items-center">
                <WrapIcon />
                <span className="ml-2 w-[108px] text-left">Wrap Text</span>
                <Arrow />
              </button>
            </div>
            <div className="flex items-center">
              <Segment className="w-[168px]">
                <Seg label="Align left"><Lines rows={[[0, 4, 32], [0, 10, 25], [0, 16, 32], [0, 22, 16], [0, 28, 32]]} /></Seg>
                <Seg label="Align center"><Lines rows={[[0, 4, 32], [4, 10, 24], [0, 16, 32], [8, 22, 16], [2, 28, 28]]} /></Seg>
                <Seg label="Align right"><Lines rows={[[0, 4, 32], [8, 10, 24], [0, 16, 32], [16, 22, 16], [4, 28, 28]]} /></Seg>
              </Segment>
              <Segment className="ml-2.5 w-28">
                <Seg label="Decrease indent"><IndentIcon /></Seg>
                <Seg label="Increase indent"><IndentIcon right /></Seg>
              </Segment>
              <button type="button" className="ml-3.5 flex items-center pt-1 text-[#7d7d7d]">
                <MergeIcon />
                <span className="ml-2 w-[76px] text-left">Merge</span>
                <Arrow color="#b5b5b5" />
              </button>
            </div>
          </div>
        </Group>
        <Dots className="mt-2 mb-1" />

        <Group title="Number" width="w-[332px]">
          <div className="flex flex-col gap-2.5 pt-1.5 pl-2.5">
            <div className="h-11">
              <Combo label="Number format" value="General" className="w-[310px]" arrowWidth="w-7" />
            </div>
            <div className="flex">
              <Segment className="w-[188px]">
                <Seg label="Accounting format" className="w-[54px]"><MoneyIcon /></Seg>
                <Seg label="Currency options" className="w-[21px]"><Arrow /></Seg>
                <Seg label="Percent style" className="flex-1 font-['Liberation_Serif',serif] text-[36px] text-[#444]">%</Seg>
                <Seg label="Comma style" className="flex-1">
                  <Icon box="0 0 12 20" className="h-5 w-3">
                    <path d="M6 0q6 0 6 7q0 9-10 13l-1-1q6-4 6-8q-6 1-6-5q0-6 5-6Z" fill="#555" />
                  </Icon>
                </Seg>
              </Segment>
              <Segment className="ml-2.5 w-28">
                <Seg label="Increase decimal"><DecimalIcon increase /></Seg>
                <Seg label="Decrease decimal"><DecimalIcon /></Seg>
              </Segment>
            </div>
          </div>
        </Group>
        <Dots className="mt-2 mb-1" />

        <Group title="Format" width="w-[412px]">
          <div className="flex">
            <button type="button" className="ml-1.5 flex w-[112px] flex-col items-center pt-2.5 text-[21px] leading-[22px]">
              <span className="flex items-center">
                <CondIcon />
                <Arrow className="ml-1.5" />
              </span>
              <span className="mt-1">Conditional Formatting</span>
            </button>
            <div className="mt-1 ml-1.5 flex h-[108px] w-[280px] items-center justify-between border-2 border-[#b1b1b1] bg-[#f3f3f3] px-2 font-['Noto_Sans',sans-serif] text-[19px] text-[#333]">
              <button type="button" aria-label="Previous style">
                <Icon box="0 0 32 32" className="h-8 w-8">
                  <circle cx="16" cy="16" r="14" fill="#fcfcfc" stroke="#999" strokeWidth="2" />
                  <path d="M20 8V24L11 16Z" fill="#3d3d3d" />
                </Icon>
              </button>
              <div className="flex flex-col gap-2">
                <button type="button" className="h-10 w-[160px] bg-white pb-1 pl-2 text-left">Percent 2</button>
                <button type="button" className="flex h-[42px] w-[160px] items-center border-4 border-[#74c476] bg-white pb-1 pl-1 leading-6">Normal</button>
              </div>
              <button type="button" aria-label="Next style">
                <Icon box="0 0 32 32" className="h-8 w-8">
                  <circle cx="16" cy="16" r="14" fill="#fcfcfc" stroke="#999" strokeWidth="2" />
                  <path d="M12 8V24L21 16Z" fill="#3d3d3d" />
                </Icon>
              </button>
            </div>
          </div>
        </Group>
        <Dots className="mt-2 mb-1" />

        <Group title="Cells" width="w-[314px]">
          <div className="flex">
            <BigButton label={<span className="pl-2">Insert</span>} icon={<InsertIcon />} className="ml-[20px] w-[95px] items-start" arrowClass="ml-[11px]" />
            <BigButton label={<span className="pl-2.5">Delete</span>} icon={<DeleteIcon />} className="w-[102px] items-start" arrowClass="ml-[10px]" />
            <BigButton label={<span className="pl-1">Format</span>} icon={<FormatIcon />} className="w-[90px] items-start" arrowClass="ml-[6px]" />
          </div>
        </Group>
        <Dots className="mt-2 mb-1" />

        <Group title="Themes" width="w-[188px]">
          <div className="flex">
            <BigButton label="Themes" icon={<ThemesIcon />} className="ml-4 w-[78px] items-start" arrowClass="ml-[6px]" />
            <div className="ml-6 flex flex-col gap-2.5 pt-1.5">
              <button type="button" aria-label="Theme colors" className="flex h-11 items-center gap-1">
                <ColorsIcon />
                <Arrow />
              </button>
              <button type="button" aria-label="Theme fonts" className="flex h-11 items-center gap-0.5 pt-1 font-['Liberation_Serif',serif] text-[34px] leading-10 font-bold text-[#466fc4]">
                Aa
                <Arrow />
              </button>
            </div>
          </div>
        </Group>
        <Dots className="mt-2 mb-1" />
      </div>
    </div>
  );
}

function FormulaBar() {
  return (
    <div className="border-b-2 border-[#999]">
      <div className="flex h-9 border-t-3 border-b-2 border-[#9c9c9c] bg-[#e4e4e4]">
        <input aria-label="Name box" defaultValue="C21" className="w-[231px] border-r-2 border-[#b5b5b5] bg-white pb-0.5 pl-1 text-center text-[22px] outline-none" />
        <button type="button" aria-label="Cell list" className="flex w-[37px] items-center justify-center border-r-2 border-[#b5b5b5]">
          <Icon box="0 0 10 20" className="h-5 w-2.5"><path d="M1 7L5 0L9 7ZM1 13L5 20L9 13Z" fill="#333" /></Icon>
        </button>
        <div className="flex w-[198px] items-center border-r-2 border-[#999] pl-5">
          <button type="button" aria-label="Cancel">
            <Icon box="0 0 26 26" className="h-[26px] w-[26px]">
              <circle cx="13" cy="13" r="12.500" fill="#989898" />
              <path d="M8 8l10 10M18 8L8 18" stroke="#f2f2f2" strokeWidth="4" />
            </Icon>
          </button>
          <button type="button" aria-label="Enter" className="ml-5">
            <Icon box="0 0 26 26" className="h-[26px] w-[26px]">
              <circle cx="13" cy="13" r="12.500" fill="#989898" />
              <path d="M7 13l5 5 8-9" stroke="#f2f2f2" strokeWidth="4" />
            </Icon>
          </button>
          <Icon box="0 0 30 30" className="ml-5 h-[30px] w-[30px]">
            <path d="M9 1Q1 6 1 15T9 29" stroke="#aaa" strokeWidth="2" />
            <circle cx="20" cy="15" r="8" fill="#c6cacf" />
            <circle cx="20" cy="17" r="5" fill="#dadde1" />
          </Icon>
          <span className="ml-5 font-['Liberation_Serif',serif] text-[29px] leading-7 font-bold text-[#3a3a3a] italic">fx</span>
        </div>
        <input aria-label="Formula" className="w-0 flex-1 bg-white outline-none" />
        <button type="button" aria-label="Expand formula bar" className="flex w-8 items-center justify-center border-l-2 border-[#999] bg-[#f4f4f4]">
          <Arrow color="#333" />
        </button>
      </div>
      <div className="h-1 bg-[#e9e9e9]" />
    </div>
  );
}

const ROWS = [
  [11, "WACC Calculation"],
  [12, "Initial Cash Flows"],
  [13, "Operating CFs"],
  [14, "Terminal CFs"],
  [15, "75/25 D/E Split"],
  [16, "25/75 D/E Split"],
  [17, "Create NPV Profile for Varying Debt"],
  [18, "Final Decision: Accept/Reject & which D/E Split?"],
  [19, "Comments"],
  [20, ""],
];

const HEAD = "h-[26px] border-r-2 border-b-2 border-[#969696] p-0 pb-0.5 font-['Noto_Sans',sans-serif] text-[22px] leading-[22px] font-bold";
const ROWHEAD = "border-r-2 border-[#969696] p-0 pr-1 align-bottom font-['DejaVu_Sans',sans-serif] text-[20px] leading-[28px] font-bold";
const CELL = "border-r-2 border-[#cbcbcb] p-0";

function Grid() {
  return (
    <div className="flex flex-1 items-stretch">
      <div className="min-w-0 flex-1 overflow-hidden border-r-2 border-[#969696]">
        <table className="w-full table-fixed border-separate border-spacing-0 bg-white">
          <colgroup>
            <col className="w-[58px]" />
            <col className="w-[562px]" />
            <col className="w-[1366px]" />
            <col className="w-[424px]" />
            <col />
          </colgroup>
          <thead>
            <tr className="bg-linear-to-b from-[#ebebeb] to-[#dedede] text-[#666]">
              <th scope="col" aria-label="Select all" className={HEAD}>
                <Icon box="0 0 22 18" className="ml-auto mr-0.5 h-[18px] w-[22px]">
                  <path d="M0 17H21V0Z" fill="#fff" />
                  <path d="M0 17H21V0" stroke="#999" strokeWidth="2" />
                </Icon>
              </th>
              <th scope="col" className={HEAD}>A</th>
              <th scope="col" className={HEAD}>B</th>
              <th scope="col" className={HEAD + " bg-linear-to-b from-[#bdbdbd] to-[#9b9b9b] text-white"}>C</th>
              <th scope="col" aria-label="D" className="border-b-2 border-[#969696] p-0" />
            </tr>
          </thead>
          <tbody>
            {ROWS.map(([n, text]) => (
              <tr key={n} className="h-[110px]">
                <th scope="row" className={ROWHEAD + " border-b-2 bg-[#dadada] text-[#666] [box-shadow:inset_0_2px_0_#efefef]"}>{n}</th>
                <td className={CELL + " border-b-2 pb-0.5 text-center font-['Liberation_Serif',serif] text-[24px] font-bold whitespace-nowrap text-black italic"}>{text}</td>
                <td className={CELL + " border-b-2"} />
                <td className={CELL + " border-b-2"} />
                <td className="border-b-2 border-[#cbcbcb] p-0" />
              </tr>
            ))}
            <tr className="h-[108px]">
              <th scope="row" className={ROWHEAD + " bg-[#989898] text-white [text-shadow:0_2px_0_#555]"}>21</th>
              <td className={CELL} />
              <td className={CELL} />
              <td className={CELL + " relative"}>
                <div className="absolute -top-0.5 -right-0.5 bottom-0 -left-0.5 border-4 border-b-2 border-[#1257cf]">
                  <div className="absolute -right-2 -bottom-0.5 h-1.5 w-3 border-2 border-b-0 border-[#1257cf] bg-[#a9d0f5]" />
                </div>
              </td>
              <td className="p-0" />
            </tr>
          </tbody>
        </table>
      </div>
      <div className="flex w-[30px] flex-col">
        <div className="flex h-[18px] flex-col items-center justify-center gap-[3px] border-b-2 border-[#a5a5a5] bg-white">
          <div className="h-0.5 w-[18px] bg-[#a0a0a0]" />
          <div className="h-0.5 w-[18px] bg-[#a0a0a0]" />
        </div>
        <div className="flex flex-1 justify-center border-x-2 border-[#ebebeb] bg-[#fafafa] pt-[304px]">
          <div className="h-[321px] w-4 rounded-full bg-[#c1c1c1]" />
        </div>
      </div>
    </div>
  );
}

const SHEETS = [
  ["0.Case Instructions", "w-[229px]", false],
  ["FullCase", "w-[140px]", true],
  ["Grading Rubric", "w-[207px]", true],
  ["Answer Sheet", "w-[171px]", false],
  ["CaseA", "w-[102px]", false],
  ["CaseB", "w-[102px]", false],
  ["Rd with DtoE", "w-[164px]", false],
  ["+", "w-[45px]", false],
];

function SheetTab({ name, width, locked }) {
  const active = name === "Answer Sheet";
  return (
    <div className={"shrink-0 [filter:drop-shadow(0_2px_1px_#4a5560)_drop-shadow(-1px_0_0_#8b9299)] " + width}>
      <button
        type="button"
        aria-pressed={active}
        className={
          "flex h-7 w-full items-center justify-center pb-1 leading-6 whitespace-nowrap [clip-path:polygon(0_0,100%_0,100%_35%,calc(100%_-_12px)_90%,calc(100%_-_18px)_100%,6px_100%,0_80%)] " +
          (active ? "bg-[#fbfbfb] text-[18px] font-bold " : "bg-[#e2e2e2] ") +
          (name === "+" ? "pr-1 text-[26px] font-bold text-[#555]" : "")
        }
      >
        {name}
        {locked && <LockIcon />}
      </button>
    </div>
  );
}

function NavButton({ label, d }) {
  return (
    <button type="button" aria-label={label}>
      <Icon box="0 0 18 14" className="h-3.5 w-[18px]"><path d={d} fill="#a3a3a3" /></Icon>
    </button>
  );
}

function StatusCell({ className = "", children }) {
  return (
    <div className={"flex items-center border-r-2 border-[#a8a8a8] bg-[linear-gradient(#fff_0_2px,#f0f2f2_2px,#ebecec_15px,#e2e3e5_15px,#e2e3e5_30px,#fff_31px)] pb-0.5 " + className}>
      {children}
    </div>
  );
}

function BottomBar() {
  return (
    <div className={"flex h-[70px] border-t-2 border-[#8f8f8f] text-[19px] " + GRANDE}>
      <div className="w-[132px] shrink-0 border-r-2 border-[#a8a8a8] bg-linear-to-b from-[#fdfdfd] via-[#ececec] to-[#fafafa] pt-2 pl-1.5">
        <div className="flex h-12 w-[118px] overflow-hidden rounded-md border-2 border-[#555]">
          <button type="button" aria-label="Normal view" aria-pressed="true" className="flex w-[58px] items-center justify-center bg-linear-to-b from-[#3d3d3d] to-[#7c7c7c]">
            <Icon box="0 0 32 26" className="h-[26px] w-8">
              <rect x="1" y="1" width="30" height="24" rx="1" fill="#2a5f9c" stroke="#8fd0f5" strokeWidth="2" />
              <path d="M4 6h24M4 13h24M4 20h24" stroke="#8fd0f5" strokeWidth="4" strokeDasharray="5 1.400" />
            </Icon>
          </button>
          <button type="button" aria-label="Page layout view" className="flex flex-1 items-center justify-center bg-linear-to-b from-[#fdfdfd] to-[#dcdcdc]">
            <Icon box="0 0 42 26" className="h-[26px] w-[42px]">
              {[1, 23].map((x) => (
                <g key={x}>
                  <rect x={x} y="1" width="17" height="24" rx="1" fill="#fff" stroke="#333" strokeWidth="2" />
                  <path d={`M${x + 3} 7h12M${x + 3} 13h12M${x + 3} 19h12`} stroke="#333" strokeWidth="4" strokeDasharray="5 1.500" />
                </g>
              ))}
            </Icon>
          </button>
        </div>
      </div>
      <div className="flex min-w-0 flex-1 flex-col">
        <div className="flex h-[34px]">
          <div className="flex min-w-0 flex-1 border-r-2 border-b-4 border-[#8f8f8f] bg-[#97a5b7]">
            <div className="flex w-[132px] shrink-0 items-center gap-[11px] bg-linear-to-b from-[#e9e9e9] to-white pb-1 pl-3.5">
              <NavButton label="First sheet" d="M0 0H2V14H0ZM16 0V14L4 7Z" />
              <NavButton label="Previous sheet" d="M15 0V14L3 7Z" />
              <NavButton label="Next sheet" d="M3 0V14L15 7Z" />
              <NavButton label="Last sheet" d="M2 0V14L14 7ZM16 0H18V14H16Z" />
            </div>
            <div className="ml-[25px] flex shrink-0">
              {SHEETS.map(([name, width, locked]) => (
                <SheetTab key={name} name={name} width={width} locked={locked} />
              ))}
            </div>
            <div className="ml-auto w-2.5 shrink-0 bg-[#c9c9c9]" />
            <div className="flex w-[910px] shrink-0 items-center border-y-2 border-[#ebebeb] bg-[#fafafa] pl-1">
              <div className="h-4 w-[328px] rounded-full bg-[#c1c1c1]" />
            </div>
            <div className="flex w-[24px] shrink-0 items-center justify-center gap-1 border-l-2 border-[#999] bg-white">
              <div className="h-[18px] w-0.5 bg-[#a5a5a5]" />
              <div className="h-[18px] w-0.5 bg-[#a5a5a5]" />
            </div>
          </div>
          <div className="w-[30px] border-b-2 border-[#999] bg-white" />
        </div>
        <div className="flex flex-1 text-black">
          <StatusCell className={"w-[189px] pl-1.5 text-[21px] " + SANS}>Normal View</StatusCell>
          <StatusCell className="w-[755px] pl-3">Select destination and press ENTER or choose Paste</StatusCell>
          <StatusCell className="w-[316px]" />
          <StatusCell className="w-[278px] justify-between pr-2.5 pl-1.5">
            Sum=0
            <Icon box="0 0 18 10" className="h-2.5 w-[18px]"><path d="M0 0H18L9 10Z" fill="#000" /></Icon>
          </StatusCell>
          <StatusCell className="w-[70px]" />
          <StatusCell className="w-[68px]" />
          <StatusCell className="w-[56px]" />
          <StatusCell className="flex-1 border-r-0" />
        </div>
      </div>
    </div>
  );
}

export default function App() {
  return (
    <div className={"flex min-h-screen flex-col overflow-hidden bg-white text-black " + SANS}>
      <Gradients />
      <Toolbar />
      <RibbonTabs />
      <Ribbon />
      <FormulaBar />
      <Grid />
      <BottomBar />
    </div>
  );
}
